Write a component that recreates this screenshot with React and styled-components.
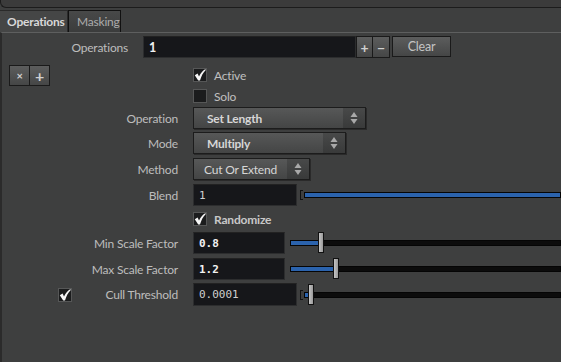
import React from 'react';
import styled, { createGlobalStyle } from 'styled-components';

const Global = createGlobalStyle`
  html, body {
    margin: 0;
    padding: 0;
    background: #3e3f3f;
    overflow: hidden;
  }
  body {
    font-family: Lato, "Noto Sans", sans-serif;
    font-size: 12px;
    letter-spacing: -0.2px;
    color: #c8c8c8;
  }
`;

const Page = styled.div`
  width: 561px;
  height: 362px;
  display: flex;
  flex-direction: column;
  overflow: hidden;
`;

const TopStrip = styled.div`
  height: 7px;
  background: #3b3b3b;
  border-bottom: 1px solid #1c1c1c;
  border-left: 1px solid #1c1c1c;
  border-bottom-left-radius: 6px;
  flex: none;
`;

const TabBar = styled.div`
  display: flex;
  margin-top: 2px;
  height: 22px;
  flex: none;
`;

const Tab = styled.div`
  display: flex;
  align-items: center;
  padding: 0 ${(p) => (p.$active ? '7px' : '8px')};
  width: ${(p) => p.$w}px;
  box-sizing: border-box;
  font-weight: ${(p) => (p.$active ? 700 : 400)};
  color: ${(p) => (p.$active ? '#d8d8d8' : '#acacac')};
  background: ${(p) => (p.$active ? '#454646' : 'linear-gradient(#484949, #3b3c3c)')};
  border: 1px solid ${(p) => (p.$active ? '#2a2a2a' : '#111')};
  border-bottom: none;
  ${(p) => p.$active && 'border-left: none;'}
`;

const Body = styled.div`
  flex: 1;
  border-top: 1px solid #5e5f5f;
  border-left: 2px solid #2b2b2b;
  display: flex;
  flex-direction: column;
`;

const Row = styled.div`
  display: flex;
  align-items: center;
  height: ${(p) => p.$h}px;
  flex: none;
  margin-top: ${(p) => p.$mt || 0}px;
`;

const LabelCell = styled.div`
  width: ${(p) => p.$w || 176}px;
  flex: none;
  display: flex;
  align-items: center;
  justify-content: ${(p) => (p.$between ? 'space-between' : 'flex-end')};
  padding-left: ${(p) => p.$pl || 0}px;
  box-sizing: border-box;
  margin-right: ${(p) => p.$gap || 15}px;
  color: #bdbdbd;
  white-space: nowrap;
`;

const Field = styled.div`
  width: ${(p) => p.$w}px;
  height: ${(p) => p.$h || 22}px;
  box-sizing: border-box;
  background: #16171a;
  border: 1px solid #2c2d2e;
  border-top-color: #222;
  display: flex;
  align-items: center;
  padding-left: 5px;
  letter-spacing: 0;
  color: ${(p) => (p.$dim ? '#d0d0d0' : '#f2f2f2')};
  font-weight: ${(p) => (p.$bold ? 700 : 400)};
  font-family: ${(p) => (p.$mono ? '"DejaVu Sans Mono", monospace' : 'inherit')};
  font-size: ${(p) => (p.$mono ? '11px' : '12.5px')};
  flex: none;
`;

const Btn = styled.div`
  width: ${(p) => p.$w}px;
  height: ${(p) => p.$h || 21}px;
  box-sizing: border-box;
  background: linear-gradient(#5c5d5d, #454646);
  border: 1px solid #1a1a1a;
  border-left-width: ${(p) => (p.$joined ? 0 : 1)}px;
  display: flex;
  align-items: center;
  justify-content: center;
  color: ${(p) => p.$color || '#d0d0d0'};
  font-size: ${(p) => p.$fs || 12.5}px;
  font-weight: ${(p) => p.$fw || 400};
  flex: none;
  margin-left: ${(p) => p.$ml || 0}px;
  margin-top: ${(p) => p.$mtop || 0}px;
`;

const Box = styled.div`
  width: 14px;
  height: 14px;
  box-sizing: border-box;
  background: #1b1c1d;
  border: 1px solid #565757;
  display: flex;
  align-items: center;
  justify-content: center;
  flex: none;
`;

const CheckText = styled.span`
  margin-left: 7px;
  color: ${(p) => (p.$bold ? '#c8c8c8' : '#c0c0c0')};
  font-weight: ${(p) => (p.$bold ? 700 : 400)};
`;

const Menu = styled.div`
  width: ${(p) => p.$w}px;
  height: 22px;
  box-sizing: border-box;
  display: flex;
  border: 1px solid #1c1c1c;
  background: linear-gradient(#575858, #444545);
  box-shadow: 1px 1px 0 #2a2a2a;
  flex: none;
`;

const MenuText = styled.div`
  flex: 1;
  display: flex;
  align-items: center;
  padding-left: ${(p) => (p.$bold ? 13 : 10)}px;
  font-weight: ${(p) => (p.$bold ? 700 : 400)};
  color: #d6d6d6;
`;

const MenuArrow = styled.div`
  width: 22px;
  display: flex;
  align-items: center;
  justify-content: center;
  background: linear-gradient(#484949, #393a3a);
`;

const SliderWrap = styled.div`
  flex: 1;
  position: relative;
  display: flex;
  align-items: center;
  height: 22px;
  margin-left: ${(p) => p.$ml}px;
`;

const Bracket = styled.div`
  width: 2px;
  height: 8px;
  border: 1px solid #111;
  border-right: none;
  margin-right: 1px;
  flex: none;
`;

const Track = styled.div`
  flex: 1;
  height: 6px;
  box-sizing: border-box;
  border: 1px solid #050505;
  background: #0c0c0c;
  display: flex;
`;

const Fill = styled.div`
  background: #2b63ad;
  height: 100%;
  flex: none;
`;

const Handle = styled.div`
  position: absolute;
  top: 0;
  width: 6px;
  height: 21px;
  box-sizing: border-box;
  border: 1px solid #111;
  background: linear-gradient(90deg, #c4c4c4, #9a9a9a);
`;

const Check = () => (
  <svg width="12" height="12" viewBox="0 0 12 12">
    <path
      d="M0.8 6.2 L3.6 4.6 L5 7.4 C6.8 4 8.8 1.6 11.6 0 L11.6 1.2 C9.2 3.6 7.2 7 6 11.6 L4.2 11.6 Z"
      fill="#f6f6f6"
    />
  </svg>
);

const Arrows = () => (
  <svg width="8" height="14" viewBox="0 0 8 14">
    <path d="M4 1 L7.5 6 L0.5 6 Z" fill="#a9a9a9" />
    <path d="M0.5 8 L7.5 8 L4 13 Z" fill="#a9a9a9" />
  </svg>
);

const CheckBox = ({ on }) => <Box>{on && <Check />}</Box>;

const Slider = ({ ml, pos, fill, bracket }) => (
  <SliderWrap $ml={ml}>
    {bracket && <Bracket />}
    <Track>
      <Fill style={{ width: fill }} />
    </Track>
    {pos != null && <Handle style={{ left: pos }} />}
  </SliderWrap>
);

export default function App() {
  return (
    <Page>
      <Global />
      <TopStrip />
      <TabBar>
        <Tab $active $w={68}>Operations</Tab>
        <Tab $w={53}>Masking</Tab>
      </TabBar>
      <Body>
        <Row $h={28}>
          <LabelCell $w={126} $gap={15}>Operations</LabelCell>
          <Field $w={213} $bold>1</Field>
          <Btn $w={17} $h={22} $fs={14} $fw={700}>+</Btn>
          <Btn $w={17} $h={22} $joined $fs={14} $fw={700}>−</Btn>
          <Btn $w={59} $ml={2} $mtop={-2} $color="#c4c4c4">Clear</Btn>
        </Row>
        <Row $h={22} $mt={3}>
          <LabelCell $w={176} $pl={7} $between>
            <span style={{ display: 'flex' }}>
              <Btn $w={21} $fs={11} $fw={700}>×</Btn>
              <Btn $w={20} $joined $fs={16} $fw={700}>+</Btn>
            </span>
          </LabelCell>
          <CheckBox on />
          <CheckText>Active</CheckText>
        </Row>
        <Row $h={20}>
          <LabelCell />
          <CheckBox />
          <CheckText>Solo</CheckText>
        </Row>
        <Row $h={24}>
          <LabelCell>Operation</LabelCell>
          <Menu $w={173}>
            <MenuText $bold>Set Length</MenuText>
            <MenuArrow><Arrows /></MenuArrow>
          </Menu>
        </Row>
        <Row $h={26}>
          <LabelCell>Mode</LabelCell>
          <Menu $w={153}>
            <MenuText $bold>Multiply</MenuText>
            <MenuArrow><Arrows /></MenuArrow>
          </Menu>
        </Row>
        <Row $h={26}>
          <LabelCell>Method</LabelCell>
          <Menu $w={117}>
            <MenuText>Cut Or Extend</MenuText>
            <MenuArrow><Arrows /></MenuArrow>
          </Menu>
        </Row>
        <Row $h={26}>
          <LabelCell>Blend</LabelCell>
          <Field $w={104} $mono $dim>1</Field>
          <Slider ml={3} fill="100%" bracket />
        </Row>
        <Row $h={22}>
          <LabelCell />
          <CheckBox on />
          <CheckText $bold>Randomize</CheckText>
        </Row>
        <Row $h={26}>
          <LabelCell>Min Scale Factor</LabelCell>
          <Field $w={92} $mono $bold>0.8</Field>
          <Slider ml={5} fill={28} pos={28} />
        </Row>
        <Row $h={26}>
          <LabelCell>Max Scale Factor</LabelCell>
          <Field $w={92} $mono $bold>1.2</Field>
          <Slider ml={5} fill={43} pos={43} />
        </Row>
        <Row $h={25}>
          <LabelCell $pl={56} $between>
            <CheckBox on />
            <span>Cull Threshold</span>
          </LabelCell>
          <Field $w={104} $h={23} $mono $dim>0.0001</Field>
          <Slider ml={3} fill={4} pos={8} bracket />
        </Row>
      </Body>
    </Page>
  );
}
